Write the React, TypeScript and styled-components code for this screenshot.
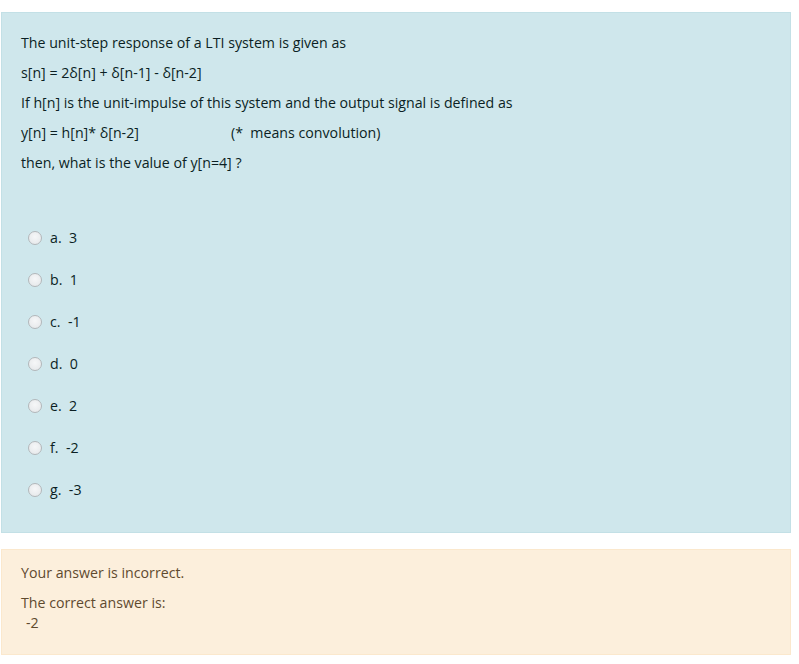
import React from "react";
import styled, { createGlobalStyle } from "styled-components";

const Global = createGlobalStyle`
  html, body { margin: 0; padding: 0; background: #ffffff; }
  body { font-family: "Open Sans", "Noto Sans", sans-serif; font-size: 14px; }
`;

const Page = styled.div`
  padding: 12px 8px 0 1px;
  display: flex;
  flex-direction: column;
  gap: 16px;
  width: 790px;
`;

const Formulation = styled.section`
  background: #cfe7ec;
  border: 1px solid #c3e0e6;
  padding: 20px 19px 32px 19px;
  color: #0b1f24;
`;

const Para = styled.p`
  margin: 0 0 10px 0;
  line-height: 20px;
  font-size: 14.2px;
  white-space: pre;
`;

const Row = styled.div`
  display: flex;
  line-height: 20px;
  font-size: 14.2px;
  margin: 0 0 10px 0;
  white-space: pre;
`;

const Col = styled.span<{ $w?: number }>`
  display: inline-block;
  width: ${(p) => (p.$w ? `${p.$w}px` : "auto")};
`;

const Options = styled.div`
  margin-top: 55px;
  display: flex;
  flex-direction: column;
  gap: 22px;
  padding-left: 7px;
`;

const Option = styled.label`
  display: flex;
  align-items: center;
  height: 20px;
  font-size: 14.2px;
  line-height: 20px;
  white-space: pre;
`;

const Radio = styled.span`
  width: 12px;
  height: 12px;
  border-radius: 50%;
  border: 1px solid #b3b7ba;
  background: radial-gradient(circle at 50% 40%, #f6f7f8 0%, #e3e6e8 100%);
  margin-right: 8px;
  flex-shrink: 0;
`;

const Outcome = styled.section`
  background: #fcefdc;
  border: 1px solid #fbe8cd;
  padding: 13px 19px 21px 19px;
  color: #5f4a2f;
`;

const OutLine = styled.div<{ $mb?: number; $indent?: number }>`
  line-height: 20px;
  font-size: 14.2px;
  margin-bottom: ${(p) => p.$mb ?? 0}px;
  padding-left: ${(p) => p.$indent ?? 0}px;
`;

const options = [
  ["a.", "3"],
  ["b.", "1"],
  ["c.", "-1"],
  ["d.", "0"],
  ["e.", "2"],
  ["f.", "-2"],
  ["g.", "-3"],
];

export default function App() {
  return (
    <>
      <Global />
      <Page>
        <Formulation>
          <Para>The unit-step response of a LTI system is given as</Para>
          <Para>s[n] = 2δ[n] + δ[n-1] - δ[n-2]</Para>
          <Para>If h[n] is the unit-impulse of this system and the output signal is defined as</Para>
          <Row>
            <Col $w={210}>y[n] = h[n]* δ[n-2]</Col>
            <Col>(*  means convolution)</Col>
          </Row>
          <Para>then, what is the value of y[n=4] ?</Para>
          <Options>
            {options.map(([l, v]) => (
              <Option key={l}>
                <Radio />
                {l}  {v}
              </Option>
            ))}
          </Options>
        </Formulation>
        <Outcome>
          <OutLine $mb={10}>Your answer is incorrect.</OutLine>
          <OutLine>The correct answer is:</OutLine>
          <OutLine $indent={5}>-2</OutLine>
        </Outcome>
      </Page>
    </>
  );
}
